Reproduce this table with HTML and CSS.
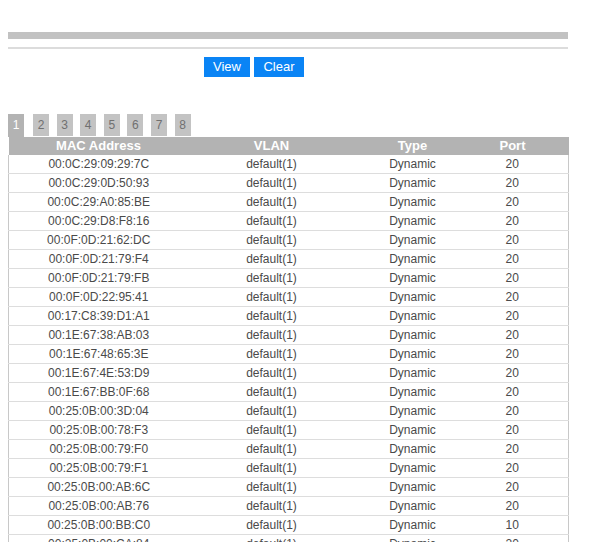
FILE: index.html
```html
<!DOCTYPE html>
<html>
<head>
<meta charset="utf-8">
<link rel="stylesheet" href="styles.css">
</head>
<body>
<div class="page">
  <div class="bar-top"></div>
  <div class="bar-line"></div>
  <div class="actions">
    <button class="btn btn-view">View</button>
    <button class="btn btn-clear">Clear</button>
  </div>
  <div class="tabs">
    <span class="tab active">1</span>
    <span class="tab">2</span>
    <span class="tab">3</span>
    <span class="tab">4</span>
    <span class="tab">5</span>
    <span class="tab">6</span>
    <span class="tab">7</span>
    <span class="tab">8</span>
  </div>
  <table class="mac-table">
    <colgroup>
      <col class="c-mac"><col class="c-vlan"><col class="c-type"><col class="c-port">
    </colgroup>
    <thead>
      <tr><th>MAC Address</th><th>VLAN</th><th>Type</th><th class="port">Port</th></tr>
    </thead>
    <tbody>
      <tr><td>00:0C:29:09:29:7C</td><td>default(1)</td><td>Dynamic</td><td class="port">20</td></tr>
      <tr><td>00:0C:29:0D:50:93</td><td>default(1)</td><td>Dynamic</td><td class="port">20</td></tr>
      <tr><td>00:0C:29:A0:85:BE</td><td>default(1)</td><td>Dynamic</td><td class="port">20</td></tr>
      <tr><td>00:0C:29:D8:F8:16</td><td>default(1)</td><td>Dynamic</td><td class="port">20</td></tr>
      <tr><td>00:0F:0D:21:62:DC</td><td>default(1)</td><td>Dynamic</td><td class="port">20</td></tr>
      <tr><td>00:0F:0D:21:79:F4</td><td>default(1)</td><td>Dynamic</td><td class="port">20</td></tr>
      <tr><td>00:0F:0D:21:79:FB</td><td>default(1)</td><td>Dynamic</td><td class="port">20</td></tr>
      <tr><td>00:0F:0D:22:95:41</td><td>default(1)</td><td>Dynamic</td><td class="port">20</td></tr>
      <tr><td>00:17:C8:39:D1:A1</td><td>default(1)</td><td>Dynamic</td><td class="port">20</td></tr>
      <tr><td>00:1E:67:38:AB:03</td><td>default(1)</td><td>Dynamic</td><td class="port">20</td></tr>
      <tr><td>00:1E:67:48:65:3E</td><td>default(1)</td><td>Dynamic</td><td class="port">20</td></tr>
      <tr><td>00:1E:67:4E:53:D9</td><td>default(1)</td><td>Dynamic</td><td class="port">20</td></tr>
      <tr><td>00:1E:67:BB:0F:68</td><td>default(1)</td><td>Dynamic</td><td class="port">20</td></tr>
      <tr><td>00:25:0B:00:3D:04</td><td>default(1)</td><td>Dynamic</td><td class="port">20</td></tr>
      <tr><td>00:25:0B:00:78:F3</td><td>default(1)</td><td>Dynamic</td><td class="port">20</td></tr>
      <tr><td>00:25:0B:00:79:F0</td><td>default(1)</td><td>Dynamic</td><td class="port">20</td></tr>
      <tr><td>00:25:0B:00:79:F1</td><td>default(1)</td><td>Dynamic</td><td class="port">20</td></tr>
      <tr><td>00:25:0B:00:AB:6C</td><td>default(1)</td><td>Dynamic</td><td class="port">20</td></tr>
      <tr><td>00:25:0B:00:AB:76</td><td>default(1)</td><td>Dynamic</td><td class="port">20</td></tr>
      <tr><td>00:25:0B:00:BB:C0</td><td>default(1)</td><td>Dynamic</td><td class="port">10</td></tr>
      <tr><td>00:25:0B:00:CA:84</td><td>default(1)</td><td>Dynamic</td><td class="port">20</td></tr>
    </tbody>
  </table>
</div>
</body>
</html>
```
FILE: styles.css
```css
html, body {
  margin: 0;
  padding: 0;
  background: #ffffff;
}
body {
  font-family: "Liberation Sans", Arial, sans-serif;
  color: #4a4a4a;
  overflow: hidden;
}
.page {
  width: 560px;
  margin-left: 8px;
  padding-top: 32px;
}
.bar-top {
  height: 7px;
  background: #c2c2c2;
}
.bar-line {
  margin-top: 8px;
  height: 2px;
  background: #dcdcdc;
}
.actions {
  display: flex;
  gap: 4px;
  margin-top: 8px;
  padding-left: 196px;
}
.btn {
  border: none;
  margin: 0;
  padding: 0;
  height: 20px;
  background: #0a84f5;
  color: #ffffff;
  font-family: "Liberation Sans", Arial, sans-serif;
  font-size: 13px;
  line-height: 20px;
}
.btn-view { width: 46px; }
.btn-clear { width: 50px; }
.tabs {
  display: flex;
  align-items: flex-start;
  margin-top: 37px;
  height: 23px;
}
.tab {
  width: 16px;
  height: 22px;
  line-height: 22px;
  text-align: center;
  background: #c3c3c3;
  color: #707070;
  font-size: 12px;
  margin-right: 7.6px;
}
.tab.active {
  height: 23px;
  background: #b3b3b3;
  color: #ffffff;
  margin-right: 9px;
}
.mac-table {
  width: 560px;
  border-collapse: collapse;
  table-layout: fixed;
  font-size: 12px;
}
.c-mac { width: 180px; }
.c-vlan { width: 166px; }
.c-type { width: 116px; }
.c-port { width: 98px; }
.mac-table th {
  background: #b3b3b3;
  color: #ffffff;
  font-weight: bold;
  font-size: 13px;
  height: 18px;
  line-height: 18px;
  padding: 0;
  text-align: center;
}
.mac-table td {
  height: 18px;
  line-height: 18px;
  padding: 0;
  text-align: center;
  border-bottom: 1px solid #dddddd;
  white-space: nowrap;
}
.mac-table .port {
  padding-right: 14px;
}
.mac-table td:first-child {
  border-left: 1px solid #c8c8c8;
}
.mac-table td:last-child {
  border-right: 1px solid #c8c8c8;
}
```
